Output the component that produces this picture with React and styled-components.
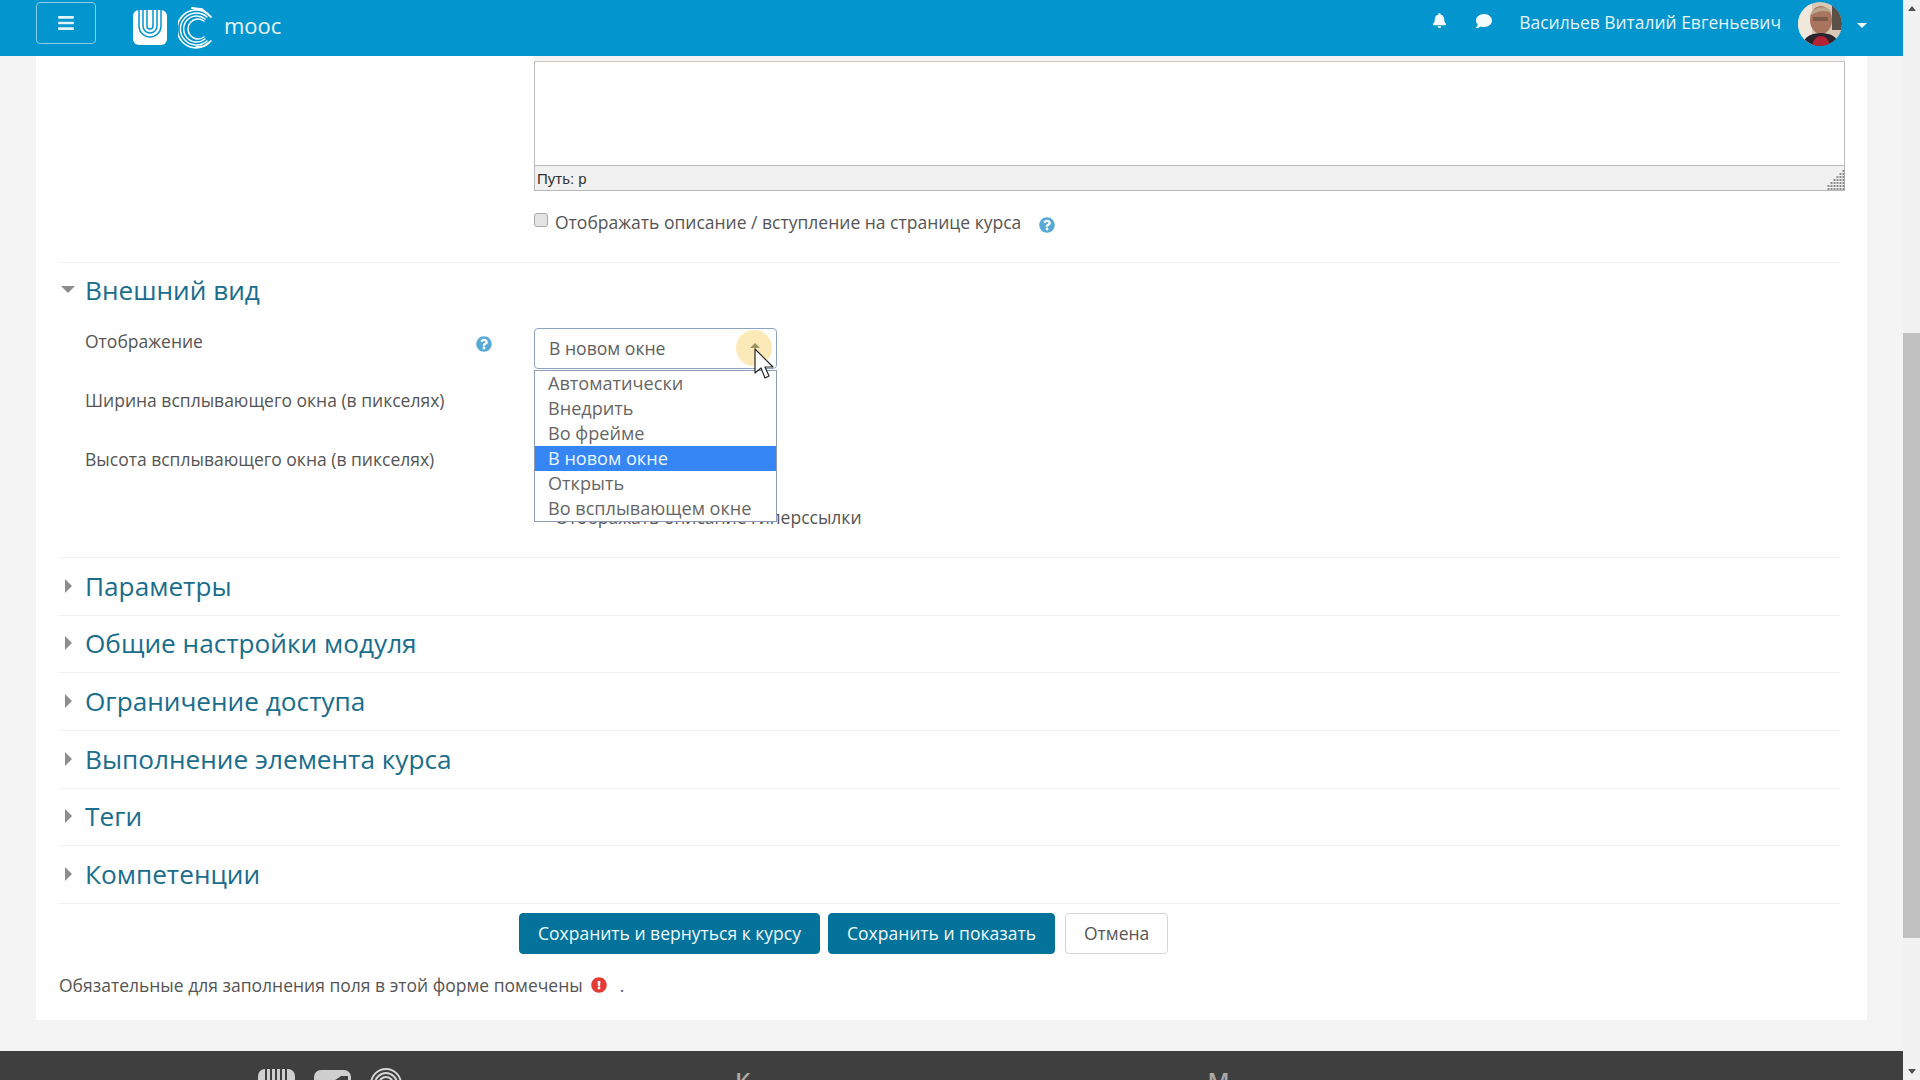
import React from 'react';
import styled, { createGlobalStyle } from 'styled-components';
import { FaBars, FaBell, FaComment, FaQuestionCircle, FaExclamationCircle } from 'react-icons/fa';

const Global = createGlobalStyle`
  html, body { margin: 0; padding: 0; height: 100%; overflow: hidden; background: #f4f4f4; }
  * { box-sizing: border-box; }
  body { font-family: "Open Sans", "Noto Sans", sans-serif; color: #555; font-size: 17.5px; }
`;

const Shell = styled.div`
  display: grid;
  grid-template-columns: 1fr 17px;
  width: 1920px;
  height: 1080px;
  overflow: hidden;
`;
const Page = styled.div`
  display: flex;
  flex-direction: column;
  min-width: 0;
  height: 1080px;
  overflow: hidden;
`;
const Header = styled.header`
  flex: none;
  height: 56px;
  background: #0395cd;
  display: flex;
  align-items: flex-start;
  color: #fff;
`;
const Toggle = styled.div`
  margin: 2px 0 0 36px;
  width: 60px;
  height: 42px;
  border: 1px solid #8ccbe6;
  border-radius: 4px;
  display: flex;
  align-items: center;
  justify-content: center;
  color: #e4f4fb;
  font-size: 18px;
`;
const LogoU = styled.svg`
  margin: 10px 0 0 37px;
  flex: none;
`;
const LogoC = styled.svg`
  margin: 5px 0 0 11px;
  flex: none;
`;
const Brand = styled.div`
  margin: 8px 0 0 10px;
  font-size: 22px;
  line-height: 34px;
  color: #e8f6fc;
`;
const Spacer = styled.div`
  flex: 1;
`;
const NavIcon = styled.div`
  margin: 13px 0 0 ${p => p.$gap}px;
  font-size: ${p => p.$size}px;
  line-height: 18px;
  height: 18px;
  color: #f4fbfe;
`;
const UserName = styled.div`
  margin: 9px 0 0 27px;
  font-size: 17.45px;
  line-height: 26px;
  color: #e3f4fb;
`;
const Avatar = styled.svg`
  margin: 2px 0 0 17px;
  flex: none;
  border-radius: 50%;
`;
const NavCaret = styled.div`
  margin: 23px 36px 0 15px;
  width: 0;
  height: 0;
  border-left: 5px solid transparent;
  border-right: 5px solid transparent;
  border-top: 5px solid #e8f6fc;
`;
const Card = styled.main`
  flex: none;
  margin: 0 36px 31px;
  height: 964px;
  background: #fff;
  padding: 0 27px 0 23px;
`;
const Editor = styled.div`
  margin: 0 -5px 0 475px;
  display: flex;
  flex-direction: column;
`;
const EditorStrip = styled.div`
  height: 6px;
  background: #f3f3f3;
  border-bottom: 1px solid #c9c4bc;
`;
const EditorArea = styled.div`
  height: 104px;
  background: #fff;
  border-left: 1px solid #b9b9b9;
  border-right: 1px solid #b9b9b9;
  border-bottom: 1px solid #b9b9b9;
`;
const StatusBar = styled.div`
  height: 25px;
  background: #f1f1f1;
  border-left: 1px solid #b9b9b9;
  border-right: 1px solid #b9b9b9;
  border-bottom: 1px solid #b9b9b9;
  display: flex;
  align-items: center;
  justify-content: space-between;
  padding-left: 2px;
  font-family: "Liberation Sans", Arial, sans-serif;
  font-size: 15px;
  color: #333;
`;
const Grip = styled.svg`
  align-self: flex-end;
  margin-right: -1px;
  margin-bottom: -1px;
`;
const CheckLine = styled.div`
  display: flex;
  align-items: center;
  margin: ${p => p.$top}px 0 0 ${p => p.$left}px;
  height: 24px;
  line-height: 24px;
  white-space: nowrap;
`;
const Check = styled.span`
  display: block;
  flex: none;
  width: 14px;
  height: 14px;
  margin: -5px 7px 0 0;
  background: #e4e4e4;
  border: 1px solid #a8a8a8;
  border-radius: 3px;
`;
const Help = styled(FaQuestionCircle)`
  flex: none;
  color: #57a9d6;
  font-size: 16px;
  margin: ${p => p.$mt || 2}px 0 0 ${p => p.$ml || 0}px;
`;
const Section = styled.section`
  border-top: 1px solid #f1f1f1;
  margin-top: ${p => p.$top || 0}px;
`;
const Legend = styled.div`
  display: flex;
  align-items: center;
  height: ${p => p.$h}px;
  padding-bottom: ${p => p.$pb || 0}px;
  color: #1a6d8c;
  font-size: 26.2px;
  white-space: nowrap;
`;
const CaretBox = styled.div`
  width: 26px;
  flex: none;
  display: flex;
  justify-content: ${p => p.$open ? 'flex-start' : 'center'};
  padding-left: ${p => p.$open ? 2 : 0}px;
  margin-top: ${p => p.$open ? -1 : 0}px;
`;
const CaretDown = styled.i`
  display: block;
  width: 0;
  height: 0;
  border-left: 7.5px solid transparent;
  border-right: 7.5px solid transparent;
  border-top: 7.5px solid #8d8d8d;
`;
const CaretRight = styled.i`
  display: block;
  margin-left: -8px;
  width: 0;
  height: 0;
  border-top: 7.5px solid transparent;
  border-bottom: 7.5px solid transparent;
  border-left: 7.5px solid #8d8d8d;
`;
const Row = styled.div`
  display: grid;
  grid-template-columns: 475px 1fr;
  height: 59px;
`;
const Label = styled.div`
  padding: 8px 42px 0 26px;
  display: flex;
  justify-content: space-between;
  align-items: flex-start;
  line-height: 24px;
  white-space: nowrap;
`;
const SelectWrap = styled.div`
  position: relative;
  margin-top: 7px;
  width: 243px;
  height: 41px;
  z-index: 2;
`;
const SelectBox = styled.div`
  height: 41px;
  border: 1px solid #8ea3c2;
  border-radius: 4px;
  background: #fff;
  padding-left: 14px;
  line-height: 39px;
  font-size: 17.6px;
  color: #5e5e5e;
`;
const Glow = styled.div`
  position: absolute;
  left: 202px;
  top: 2px;
  width: 36px;
  height: 36px;
  border-radius: 50%;
  background: #fbeab8;
`;
const SelectCaret = styled.div`
  position: absolute;
  left: 216px;
  top: 15px;
  width: 0;
  height: 0;
  border-left: 5px solid transparent;
  border-right: 5px solid transparent;
  border-bottom: 5px solid #9a9560;
`;
const Cursor = styled.svg`
  position: absolute;
  left: 220px;
  top: 20px;
`;
const Dropdown = styled.ul`
  position: absolute;
  left: 0;
  top: 42px;
  width: 243px;
  height: 152px;
  margin: 0;
  padding: 0;
  list-style: none;
  background: #fff;
  border: 1px solid #8f9cb5;
`;
const Option = styled.li`
  height: 25px;
  line-height: 25px;
  padding-left: 13px;
  font-size: 18.1px;
  white-space: nowrap;
  background: ${p => p.$active ? '#3585f5' : 'transparent'};
  color: ${p => p.$active ? '#eaf6ff' : '#666'};
`;
const Buttons = styled.div`
  display: flex;
  margin: 9px 0 0 460px;
  gap: 8px;
`;
const Button = styled.div`
  height: 41px;
  line-height: 38px;
  padding: 0 18px;
  border-radius: 4px;
  white-space: nowrap;
  background: ${p => p.$primary ? '#04739b' : '#fff'};
  color: ${p => p.$primary ? '#eef8fc' : '#555'};
  border: 1px solid ${p => p.$primary ? '#04739b' : '#d5d5d5'};
  margin-left: ${p => p.$ml || 0}px;
`;
const Required = styled.div`
  display: flex;
  align-items: center;
  margin-top: 19px;
  height: 24px;
  line-height: 24px;
  white-space: nowrap;
`;
const Danger = styled(FaExclamationCircle)`
  color: #e53a35;
  font-size: 16px;
  margin: 1px 13px 0 8px;
`;
const Footer = styled.footer`
  flex: none;
  height: 29px;
  background: #3f3f3f;
  display: flex;
  overflow: hidden;
  align-items: flex-start;
  color: #a9a9a9;
`;
const FootLogo = styled.svg`
  flex: none;
  margin: ${p => p.$top}px 0 0 ${p => p.$left}px;
`;
const FootHead = styled.div`
  margin: 14px 0 0 ${p => p.$left}px;
  font-size: 24px;
  line-height: 32px;
  font-weight: 600;
`;
const Scrollbar = styled.div`
  background: #f1f1f1;
  display: flex;
  flex-direction: column;
  align-items: center;
  height: 1080px;
`;
const ScrollBtn = styled.div`
  height: 17px;
  flex: none;
  width: 100%;
  display: flex;
  align-items: center;
  justify-content: center;
  &::after {
    content: '';
    width: 0;
    height: 0;
    border-left: 4px solid transparent;
    border-right: 4px solid transparent;
    ${p => p.$up ? 'border-bottom: 5px solid #505050;' : 'border-top: 5px solid #505050;'}
  }
`;
const Thumb = styled.div`
  margin-top: 316px;
  width: 100%;
  height: 605px;
  flex: none;
  background: #c1c1c1;
`;
const Grow = styled.div`
  flex: 1;
`;

const closed = ['Параметры', 'Общие настройки модуля', 'Ограничение доступа', 'Выполнение элемента курса', 'Теги', 'Компетенции'];
const options = ['Автоматически', 'Внедрить', 'Во фрейме', 'В новом окне', 'Открыть', 'Во всплывающем окне'];
const gripDots = [];
for (let r = 0; r < 7; r += 1) {
  for (let c = 0; c <= Math.min(r, 5); c += 1) {
    gripDots.push([15.5 - c * 3, 1 + r * 3]);
  }
}

export default function App() {
  return (
    <Shell>
      <Global />
      <Page>
        <Header>
          <Toggle><FaBars /></Toggle>
          <LogoU width="34" height="35" viewBox="0 0 34 35">
            <rect width="34" height="35" rx="6" fill="#fff" />
            <path d="M6 0v16a11 11 0 0 0 22 0V0M10 0v16a7 7 0 0 0 14 0V0M14 0v16a3 3 0 0 0 6 0V0" fill="none" stroke="#0395cd" strokeWidth="1.5" />
          </LogoU>
          <LogoC width="36" height="46" viewBox="0 0 36 46">
            <g fill="none" stroke="#fff" strokeLinecap="round">
              <path d="M30 9A19 19 0 1 0 31 38" strokeWidth="1.6" />
              <path d="M29 12A16 16 0 1 0 29 36" strokeWidth="1.4" />
              <path d="M27 14A13 13 0 1 0 27 34" strokeWidth="1.4" />
              <path d="M26 16A10 10 0 1 0 26 32" strokeWidth="1.4" />
              <path d="M14 3L24 4L33 12" strokeWidth="1.8" />
              <path d="M18 42L26 41L33 36" strokeWidth="1.6" />
            </g>
          </LogoC>
          <Brand>mooc</Brand>
          <Spacer />
          <NavIcon $gap={0} $size={15}><FaBell /></NavIcon>
          <NavIcon $gap={29} $size={16}><FaComment /></NavIcon>
          <UserName>Васильев Виталий Евгеньевич</UserName>
          <Avatar width="44" height="44" viewBox="0 0 44 44">
            <rect width="44" height="44" fill="#d9c8b4" />
            <rect width="14" height="44" fill="#efe7dc" />
            <rect x="34" width="10" height="28" fill="#5b5048" />
            <ellipse cx="23" cy="18" rx="11" ry="14" fill="#a9755e" />
            <path d="M12 14c2-10 18-12 22-3-6-3-14-3-22 3z" fill="#b9a48c" />
            <rect x="15" y="15" width="15" height="4" fill="#7d5a48" />
            <path d="M4 44c2-10 10-13 19-13s16 3 19 13z" fill="#2c2530" />
            <path d="M14 44c1-7 5-10 9-10s8 3 9 10z" fill="#b32334" />
          </Avatar>
          <NavCaret />
        </Header>
        <Card>
          <Editor>
            <EditorStrip />
            <EditorArea />
            <StatusBar>
              Путь: p
              <Grip width="18" height="22" viewBox="0 0 18 22">
                <g fill="#8d8d8d">
                  {gripDots.map(([x, y]) => (
                    <rect key={`${x}-${y}`} x={x} y={y} width="2" height="2" />
                  ))}
                </g>
              </Grip>
            </StatusBar>
          </Editor>
          <CheckLine $top={19} $left={475}>
            <Check />
            Отображать описание / вступление на странице курса
            <Help $ml={18} $mt={6} />
          </CheckLine>
          <Section $top={28}>
            <Legend $h={58} $pb={5}>
              <CaretBox $open><CaretDown /></CaretBox>
              Внешний вид
            </Legend>
            <Row>
              <Label>Отображение<Help $mt={7} /></Label>
              <SelectWrap>
                <SelectBox>В новом окне</SelectBox>
                <Glow />
                <SelectCaret />
                <Dropdown>
                  {options.map((o, i) => <Option key={o} $active={i === 3}>{o}</Option>)}
                </Dropdown>
                <Cursor width="20" height="32" viewBox="0 0 20 32">
                  <path d="M1 1v24l6-5 4 10 4-2-4-9h8z" fill="#fff" stroke="#222" strokeWidth="1.2" strokeLinejoin="round" />
                </Cursor>
              </SelectWrap>
            </Row>
            <Row><Label>Ширина всплывающего окна (в пикселях)</Label><div /></Row>
            <Row><Label>Высота всплывающего окна (в пикселях)</Label><div /></Row>
            <Row>
              <div />
              <CheckLine $top={7} $left={0}>
                <Check />
                Отображать описание гиперссылки
              </CheckLine>
            </Row>
          </Section>
          {closed.map((t) => (
            <Section key={t}>
              <Legend $h={56.67} $pb={1}>
                <CaretBox><CaretRight /></CaretBox>
                {t}
              </Legend>
            </Section>
          ))}
          <Section>
            <Buttons>
              <Button $primary>Сохранить и вернуться к курсу</Button>
              <Button $primary>Сохранить и показать</Button>
              <Button $ml={2}>Отмена</Button>
            </Buttons>
            <Required>
              Обязательные для заполнения поля в этой форме помечены
              <Danger />
              .
            </Required>
          </Section>
        </Card>
        <Footer>
          <FootLogo $top={18} $left={258} width="37" height="36" viewBox="0 0 37 36">
            <rect width="37" height="36" rx="7" fill="#cfcfcf" />
            <path d="M8 0v20M13 0v20M18 0v20M23 0v20M28 0v20" stroke="#3f3f3f" strokeWidth="2" />
          </FootLogo>
          <FootLogo $top={19} $left={19} width="37" height="36" viewBox="0 0 37 36">
            <rect width="37" height="36" rx="7" fill="#cfcfcf" />
            <path d="M11 12c6 0 10-1 16-6l7 0v8H11z" fill="#3f3f3f" />
          </FootLogo>
          <FootLogo $top={15} $left={19} width="32" height="36" viewBox="0 0 32 36">
            <g fill="none" stroke="#d5d5d5" strokeWidth="2">
              <circle cx="16" cy="18" r="15" />
              <circle cx="16" cy="18" r="11" />
              <circle cx="16" cy="18" r="7" />
            </g>
          </FootLogo>
          <FootHead $left={333}>К</FootHead>
          <FootHead $left={457}>М</FootHead>
        </Footer>
      </Page>
      <Scrollbar>
        <ScrollBtn $up />
        <Thumb />
        <Grow />
        <ScrollBtn />
      </Scrollbar>
    </Shell>
  );
}
